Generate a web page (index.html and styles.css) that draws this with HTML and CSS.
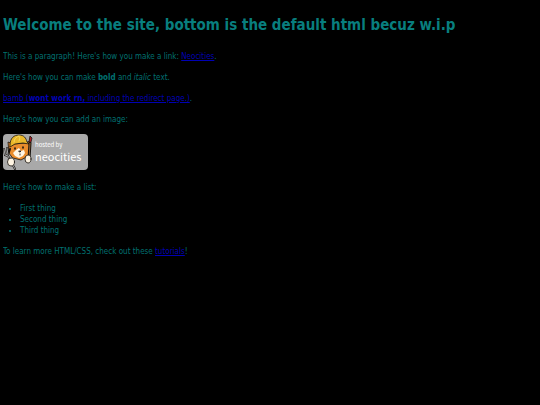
FILE: index.html
```html
<!DOCTYPE html>
<html lang="en">
<head>
<meta charset="UTF-8">
<meta name="viewport" content="width=device-width, initial-scale=1">
<title>Welcome</title>
<link rel="stylesheet" href="styles.css">
</head>
<body>
<h1>Welcome to the site, bottom is the default html becuz w.i.p</h1>
<p>This is a paragraph! Here's how you make a link: <a href="#neocities">Neocities</a>.</p>
<p>Here's how you can make <strong>bold</strong> and <em>italic</em> text.</p>
<p><a href="#bamb">bamb (<strong>wont work rn,</strong> including the redirect page.)</a>.</p>
<p>Here's how you can add an image:</p>
<svg class="badge" viewBox="0 0 85 36" role="img" aria-label="hosted by neocities">
  <rect width="85" height="36" rx="4" fill="#a9a9a9"/>
  <g stroke="#17130f" stroke-width=".8" stroke-linejoin="round" stroke-linecap="round">
    <path d="M6 19L5 8l5 2 12-1 5-2v10l-2 5-7 4-8-2z" fill="#e98c2c"/>
    <path d="M13 16l3-2 2 3 3-1 1 3-2 3-4 2-4-2-2-3z" fill="#fff6e5" stroke="none"/>
    <path d="M7 11C7 4 11 1 16 1c5 0 7 3 8 7l2 2-6-1-8 1-5 3z" fill="#e9b72a"/>
    <path d="M11 8c0-3 2-5 5-6M16 7c1-2 1-3 0-5" fill="none" stroke="#f9df67"/>
    <path d="M12 14v1M20 13v1" stroke-width="1.6"/>
    <path d="M16 17h2l-1 1zM17 20v1" fill="#17130f"/>
    <path d="M1 15l1 6 3 1 7 13M4 14l1 7M7 15l-2 6" fill="none" stroke-width="2"/>
    <path d="M1 15l1 6 3 1 7 13M4 14l1 7" fill="none" stroke="#c9cccf"/>
    <path d="M26 25l1-16" stroke-width="3"/>
    <path d="M26 25l1-16" stroke="#b7783a"/>
    <path d="M26 8l1-6 2 2-1 4z" fill="#b21f25"/>
    <ellipse cx="8" cy="28" rx="3.5" ry="4" fill="#fff5e3"/>
    <ellipse cx="25" cy="25" rx="3" ry="4" fill="#fff5e3"/>
  </g>
  <text class="badge-small" x="32" y="13">hosted by</text>
  <text class="badge-name" x="32" y="27">neocities</text>
</svg>
<p>Here's how to make a list:</p>
<ul>
  <li>First thing</li>
  <li>Second thing</li>
  <li>Third thing</li>
</ul>
<p>To learn more HTML/CSS, check out these <a href="#tutorials">tutorials</a>!</p>
</body>
</html>
```
FILE: styles.css
```css
body {
  margin: 14px 3px;
  background: #000;
  color: #007070;
  font: 8px/11px "DejaVu Sans Condensed", "DejaVu Sans", sans-serif;
}
h1 {
  margin: 0 0 14px;
  color: #087e7e;
  font-size: 15px;
  line-height: 23px;
}
p {
  margin: 10px 0;
}
a {
  color: #0000b4;
}
.badge {
  display: block;
  width: 85px;
  height: 36px;
  margin: 9px 0 12px;
}
p:has(+ .badge) {
  margin-bottom: 9px;
}
.badge text {
  fill: #fff;
  font-family: "Noto Sans CJK SC", sans-serif;
}
.badge .badge-small {
  font-size: 6px;
}
.badge .badge-name {
  font-size: 11px;
}
ul {
  margin: 10px 0;
  padding-left: 17px;
}
```
